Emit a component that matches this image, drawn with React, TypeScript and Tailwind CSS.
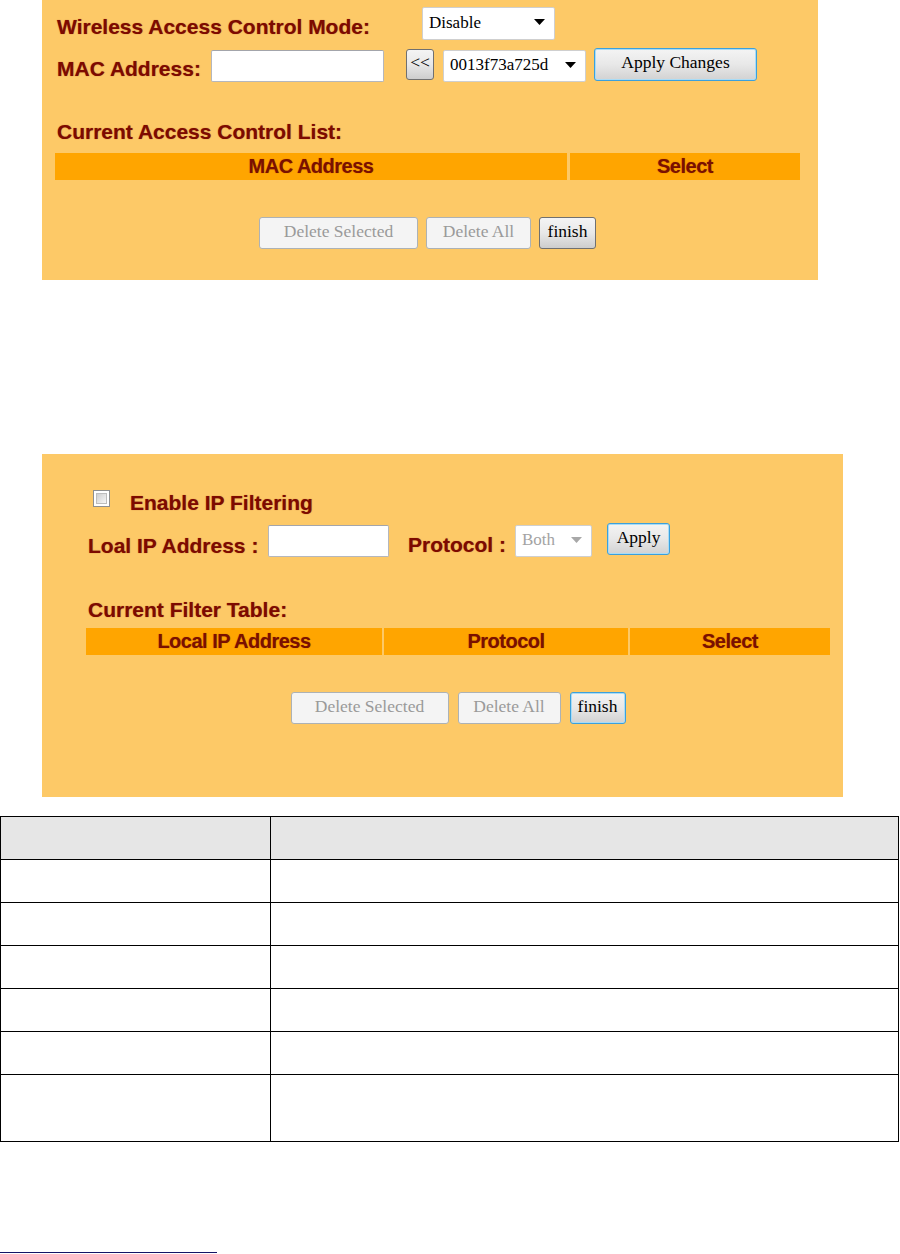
import React from "react";

const label =
  "font-['Liberation_Sans',Arial,sans-serif] font-bold text-[21px] leading-[24px] text-[#7d0a00] [text-shadow:0_0_1px_rgba(110,0,0,0.55)] whitespace-nowrap";
const head =
  "font-['Liberation_Sans',Arial,sans-serif] font-bold text-[20px] leading-[27px] tracking-[-0.5px] text-[#7a1000] [text-shadow:0_0_1px_rgba(110,0,0,0.45)] text-center whitespace-nowrap";
const serif = "font-['Liberation_Serif','Times_New_Roman',serif]";

function Arrow({ color }: { color: string }) {
  return (
    <svg width="11" height="6" viewBox="0 0 11 6" className="shrink-0">
      <path d="M0 0H11L5.5 6Z" fill={color} />
    </svg>
  );
}

type Variant = "normal" | "focus" | "disabled";

function Btn({
  children,
  className,
  variant,
}: {
  children: React.ReactNode;
  className: string;
  variant: Variant;
}) {
  const base =
    serif +
    " flex items-center justify-center rounded-[3px] border text-[17.5px] leading-none pb-[3px] whitespace-nowrap ";
  const v =
    variant === "disabled"
      ? "border-[#adb2b5] bg-[#f4f4f4] text-[#9a9a9a]"
      : variant === "focus"
      ? "border-[#3ca0dc] bg-linear-to-b from-[#f4f4f4] via-[#e8e8e8] to-[#d2d2d2] text-black shadow-[inset_0_0_0_1px_#a9dcf6]"
      : "border-[#707070] bg-linear-to-b from-[#f4f4f4] via-[#e8e8e8] to-[#cdcdcd] text-black";
  return <div className={base + v + " " + className}>{children}</div>;
}

function Select({
  text,
  className,
  disabled,
}: {
  text: string;
  className: string;
  disabled?: boolean;
}) {
  return (
    <div
      className={
        serif +
        " flex items-center justify-between bg-white border border-[#cfcfcf] rounded-[2px] pl-[6px] pr-[9px] text-[17px] leading-none pb-[3px] " +
        (disabled ? "text-[#a3a3a3] " : "text-black ") +
        className
      }
    >
      <span>{text}</span>
      <Arrow color={disabled ? "#a8a8a8" : "#000000"} />
    </div>
  );
}

function Input({ className }: { className: string }) {
  return (
    <div
      className={
        "bg-white border border-[#b5b7bd] border-t-[#a3a5ab] rounded-[2px] " +
        className
      }
    />
  );
}

export default function App() {
  return (
    <div className="w-[900px] h-[1254px] bg-white flex flex-col overflow-hidden">
      {/* Panel 1 */}
      <div className="ml-[42px] w-[776px] h-[280px] shrink-0 bg-[#fdc967] pt-[7px] flex flex-col">
        <div className="ml-[15px] flex items-start h-[33px]">
          <div className={label + " w-[365px] mt-[8px]"}>
            Wireless Access Control Mode:
          </div>
          <Select text="Disable" className="w-[133px] h-[33px]" />
        </div>
        <div className="ml-[15px] mt-[8px] flex items-start h-[34px]">
          <div className={label + " w-[154px] mt-[9px]"}>MAC Address:</div>
          <Input className="w-[173px] h-[32px] mt-[2px]" />
          <Btn
            variant="normal"
            className="ml-[22px] mt-[1px] w-[28px] h-[31px] text-[16px]"
          >
            &lt;&lt;
          </Btn>
          <Select text="0013f73a725d" className="ml-[9px] mt-[2px] w-[143px] h-[32px]" />
          <Btn variant="focus" className="ml-[8px] w-[163px] h-[33px]">
            Apply Changes
          </Btn>
        </div>
        <div className={label + " ml-[15px] mt-[38px]"}>
          Current Access Control List:
        </div>
        <div className="ml-[13px] mt-[9px] w-[745px] h-[27px] flex gap-[3px]">
          <div className={head + " w-[512px] bg-[#ffa500]"}>MAC Address</div>
          <div className={head + " flex-1 bg-[#ffa500]"}>Select</div>
        </div>
        <div className="ml-[13px] mt-[37px] w-[745px] flex justify-center gap-[8px]">
          <Btn variant="disabled" className="w-[159px] h-[32px]">
            Delete Selected
          </Btn>
          <Btn variant="disabled" className="w-[105px] h-[32px]">
            Delete All
          </Btn>
          <Btn variant="normal" className="w-[57px] h-[32px]">
            finish
          </Btn>
        </div>
      </div>

      {/* Panel 2 */}
      <div className="mt-[174px] ml-[42px] w-[801px] h-[343px] shrink-0 bg-[#fdc967] pt-[36px] flex flex-col">
        <div className="ml-[51px] flex items-start h-[25px]">
          <div className="w-[17px] h-[17px] border border-[#8e8f8f] bg-white p-[2px]">
            <div className="w-full h-full border border-[#bdbdbd] bg-linear-to-br from-[#cfcfcf] to-[#f7f7f7]" />
          </div>
          <div className={label + " ml-[20px] mt-[1px]"}>Enable IP Filtering</div>
        </div>
        <div className="ml-[46px] mt-[8px] flex items-start h-[34px]">
          <div className={label + " w-[180px] mt-[11px]"}>Loal IP Address :</div>
          <Input className="w-[121px] h-[32px] mt-[2px]" />
          <div className={label + " ml-[19px] w-[107px] mt-[10px]"}>Protocol :</div>
          <Select text="Both" disabled className="mt-[2px] w-[77px] h-[32px]" />
          <Btn variant="focus" className="ml-[15px] w-[63px] h-[32px]">
            Apply
          </Btn>
        </div>
        <div className={label + " ml-[46px] mt-[41px]"}>Current Filter Table:</div>
        <div className="ml-[44px] mt-[6px] w-[744px] h-[27px] flex gap-[2px]">
          <div className={head + " w-[296px] bg-[#ffa500]"}>Local IP Address</div>
          <div className={head + " w-[244px] bg-[#ffa500]"}>Protocol</div>
          <div className={head + " flex-1 bg-[#ffa500]"}>Select</div>
        </div>
        <div className="ml-[44px] mt-[37px] w-[744px] flex justify-center gap-[9px]">
          <Btn variant="disabled" className="w-[158px] h-[32px]">
            Delete Selected
          </Btn>
          <Btn variant="disabled" className="w-[103px] h-[32px]">
            Delete All
          </Btn>
          <Btn variant="focus" className="w-[56px] h-[32px]">
            finish
          </Btn>
        </div>
      </div>

      {/* Description table */}
      <div className="mt-[19px] w-[899px] shrink-0 border-t border-l border-black flex flex-col">
        {[
          { h: "h-[43px]", bg: "bg-[#e6e6e6]" },
          { h: "h-[43px]", bg: "bg-white" },
          { h: "h-[43px]", bg: "bg-white" },
          { h: "h-[43px]", bg: "bg-white" },
          { h: "h-[43px]", bg: "bg-white" },
          { h: "h-[43px]", bg: "bg-white" },
          { h: "h-[67px]", bg: "bg-white" },
        ].map((r, i) => (
          <div key={i} className={"flex " + r.h + " " + r.bg}>
            <div className="w-[270px] border-r border-b border-black" />
            <div className="flex-1 border-r border-b border-black" />
          </div>
        ))}
      </div>

      {/* Footnote rule */}
      <div className="mt-[110px] w-[217px] h-px shrink-0 bg-[#141466]" />
    </div>
  );
}
